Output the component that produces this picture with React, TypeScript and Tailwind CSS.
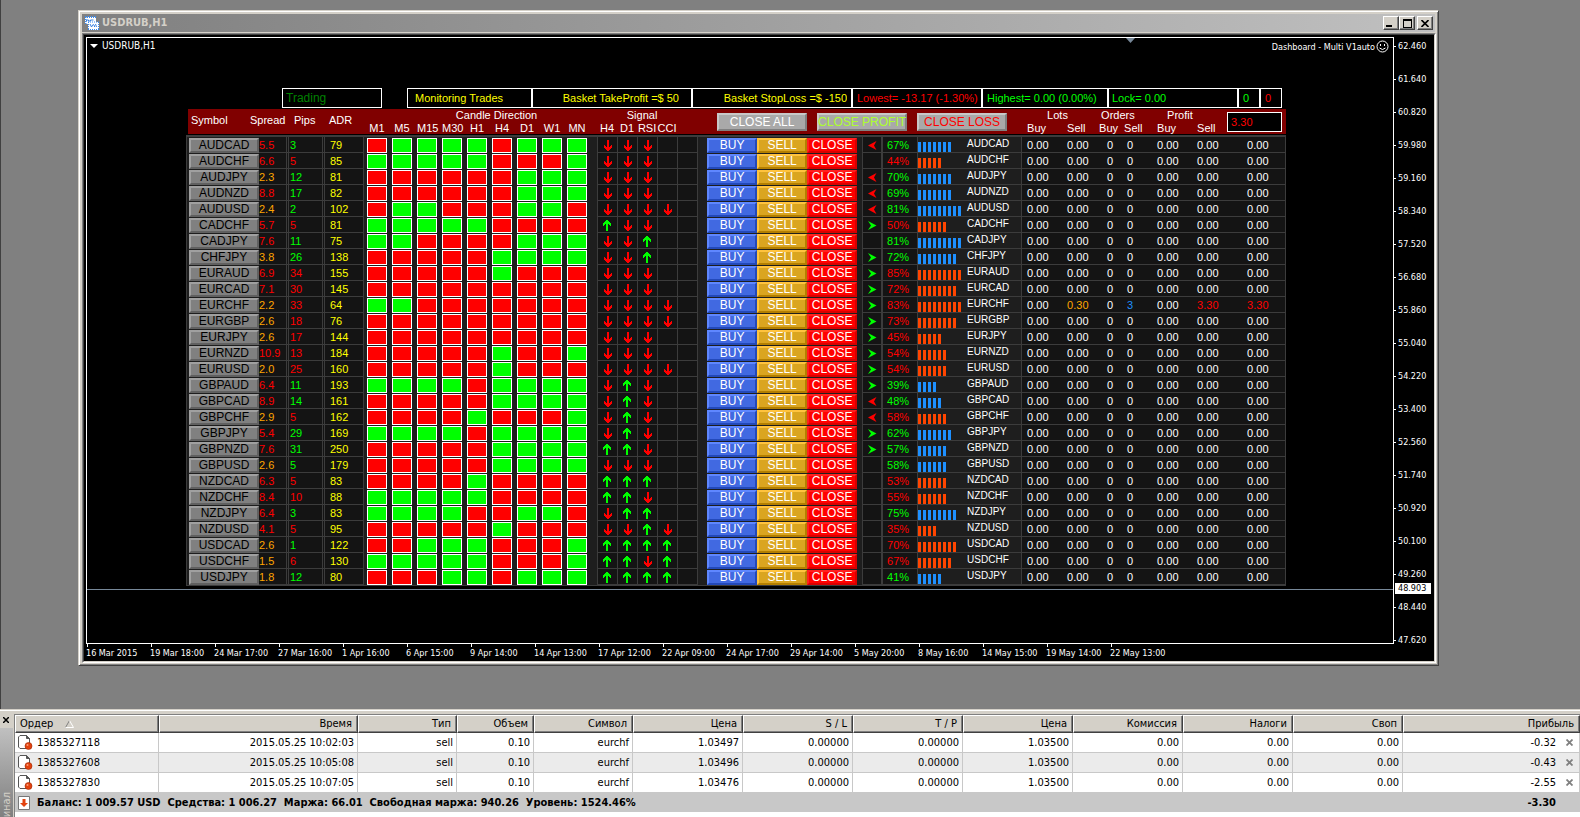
import type { ReactNode } from "react";

type Row = {
  symbol: string;
  spread: string;
  pips: number;
  adr: number;
  candles: string;
  signals: string;
  turn: "<" | ">" | "";
  pct: number;
  up: boolean;
  bars: number;
};

const r = (
  symbol: string,
  spread: string,
  pips: number,
  adr: number,
  candles: string,
  signals: string,
  turn: Row["turn"],
  pct: number,
  up: boolean,
  bars: number
): Row => ({ symbol, spread, pips, adr, candles, signals, turn, pct, up, bars });

// candles: R = bearish, G = bullish, M1 to MN. signals: D / U for H4, D1, RSI, CCI
const rows: Row[] = [
  r("AUDCAD", "5.5", 3, 79, "RGGGGRGGG", "DDD", "<", 67, true, 7),
  r("AUDCHF", "6.6", -5, 85, "GGGGGRRRG", "DDD", "", 44, false, 5),
  r("AUDJPY", "2.3", 12, 81, "RRRRRRGGG", "DDD", "<", 70, true, 7),
  r("AUDNZD", "8.8", 17, 82, "RRRRRRGGG", "DDD", "<", 69, true, 7),
  r("AUDUSD", "2.4", 2, 102, "RGGRRRGGR", "DDDD", "<", 81, true, 9),
  r("CADCHF", "5.7", -5, 81, "GGGGGRRRR", "UDD", ">", 50, false, 6),
  r("CADJPY", "7.6", 11, 75, "GGRRRRGGG", "DDU", "", 81, true, 9),
  r("CHFJPY", "3.8", 26, 138, "RRRRRGGGG", "DDU", ">", 72, true, 8),
  r("EURAUD", "6.9", -34, 155, "RRRRRGRRR", "DDD", ">", 85, false, 9),
  r("EURCAD", "7.1", -30, 145, "RRRRRRRRR", "DDD", ">", 72, false, 8),
  r("EURCHF", "2.2", -33, 64, "GGRRRRRRR", "DDDD", ">", 83, false, 9),
  r("EURGBP", "2.6", -18, 76, "RRRRRRRRR", "DDDD", ">", 73, false, 8),
  r("EURJPY", "2.6", -17, 144, "RRRRRRRRR", "DDD", ">", 45, false, 5),
  r("EURNZD", "10.9", -13, 184, "RRRRRGRRG", "DDD", ">", 54, false, 6),
  r("EURUSD", "2.0", -25, 160, "RRRRRGRRR", "DDDD", ">", 54, false, 6),
  r("GBPAUD", "6.4", 11, 193, "GGGGRGGGG", "DUD", ">", 39, true, 4),
  r("GBPCAD", "8.9", 14, 161, "RRRRRGGGG", "DUD", "<", 48, true, 5),
  r("GBPCHF", "2.9", -5, 162, "RRRRGRRRG", "DUD", "<", 58, false, 6),
  r("GBPJPY", "5.4", 29, 169, "GGGGRGGGG", "DUD", ">", 62, true, 7),
  r("GBPNZD", "7.6", 31, 250, "RRRRRGGGG", "UUD", ">", 57, true, 6),
  r("GBPUSD", "2.6", 5, 179, "RRRRRGGGG", "DDD", "", 58, true, 6),
  r("NZDCAD", "6.3", -5, 83, "RRRRGRRRR", "UUU", "", 53, false, 6),
  r("NZDCHF", "8.4", -10, 88, "GGGGGRRRR", "UUD", "", 55, false, 6),
  r("NZDJPY", "6.4", 3, 83, "GGGGRRGGR", "DUU", "", 75, true, 8),
  r("NZDUSD", "4.1", -5, 95, "RRRRRGRRR", "DDUD", "", 35, false, 4),
  r("USDCAD", "2.6", 1, 122, "RRGGGRRRG", "UUUU", "", 70, false, 8),
  r("USDCHF", "1.5", -6, 130, "GGGGGRRRG", "UUDU", "", 67, false, 7),
  r("USDJPY", "1.8", 12, 80, "RRRGGRGGG", "UUUU", "", 41, true, 5),
];

const timeframes = ["M1", "M5", "M15", "M30", "H1", "H4", "D1", "W1", "MN"];

const columnWidths = [
  3, 70, 30, 36, 39, 3, 25, 25, 25, 25, 25, 25, 25, 25, 25, 5, 20, 20, 20, 20, 20, 10, 50, 50, 50, 5,
  20, 35, 104, 40, 40, 20, 30, 40, 50, 45,
];

const prices = [
  "62.460", "61.640", "60.820", "59.980", "59.160", "58.340", "57.520", "56.680", "55.860", "55.040",
  "54.220", "53.400", "52.560", "51.740", "50.920", "50.100", "49.260", "48.440", "47.620",
];

const dates = [
  "16 Mar 2015", "19 Mar 18:00", "24 Mar 17:00", "27 Mar 16:00", "1 Apr 16:00", "6 Apr 15:00",
  "9 Apr 14:00", "14 Apr 13:00", "17 Apr 12:00", "22 Apr 09:00", "24 Apr 17:00", "29 Apr 14:00",
  "5 May 20:00", "8 May 16:00", "14 May 15:00", "19 May 14:00", "22 May 13:00",
];

const orderColumns = [
  { label: "Время", width: 199 },
  { label: "Тип", width: 99 },
  { label: "Объем", width: 77 },
  { label: "Символ", width: 99 },
  { label: "Цена", width: 110 },
  { label: "S / L", width: 110 },
  { label: "T / P", width: 110 },
  { label: "Цена", width: 110 },
  { label: "Комиссия", width: 110 },
  { label: "Налоги", width: 110 },
  { label: "Своп", width: 110 },
];

const orders = [
  { id: "1385327118", time: "2015.05.25 10:02:03", price: "1.03497", profit: "-0.32" },
  { id: "1385327608", time: "2015.05.25 10:05:08", price: "1.03496", profit: "-0.43" },
  { id: "1385327830", time: "2015.05.25 10:07:05", price: "1.03476", profit: "-2.55" },
];

function Signal({ dir }: { dir?: string }) {
  if (!dir) return null;
  return dir === "U" ? (
    <svg className="ml-[5px] block" width="8" height="11" viewBox="0 0 8 11" fill="#00ff00" shapeRendering="crispEdges">
      <path d="M3 0h2v1h1v1h1v1h1v3H7V5H6V4H5v7H3V4H2v1H1v1H0V3h1V2h1V1h1z" />
    </svg>
  ) : (
    <svg className="ml-[6px] block" width="8" height="11" viewBox="0 0 8 11" fill="#ff0000" shapeRendering="crispEdges">
      <path d="M3 0h2v7h1V6h1V5h1v3H7v1H6v1H5v1H3v-1H2V9H1V8H0V5h1v1h1v1h1z" />
    </svg>
  );
}

function Turn({ turn }: { turn: Row["turn"] }) {
  if (!turn) return null;
  return (
    <svg className="ml-[5px] block" width="9" height="9" viewBox="0 0 9 9">
      {turn === ">" ? (
        <path d="M0 0l8.500 4.500L0 9l3-4.500z" fill="#00ff00" />
      ) : (
        <path d="M8.500 0L0 4.500 8.500 9 6 4.500z" fill="#ff0000" />
      )}
    </svg>
  );
}

function Field({ label, value, className }: { label: string; value: string; className: string }) {
  return (
    <input
      readOnly
      aria-label={label}
      value={value}
      className={`h-5 min-w-0 border border-white bg-black text-[11px] outline-none ${className}`}
    />
  );
}

function TradeButton({ children, className }: { children: ReactNode; className: string }) {
  return (
    <button
      type="button"
      className={`mt-px block h-[15px] w-full border-2 text-center text-xs leading-[11px] whitespace-nowrap ${className}`}
    >
      {children}
    </button>
  );
}

const cell = "border-b border-b-[#3c3c3c] bg-[#141414] p-0 pt-[2px]";

function DashboardRow({ row }: { row: Row }) {
  const open = row.symbol === "EURCHF";
  return (
    <tr className="h-4 leading-[13px]">
      <td className="border-l border-[#3c3c3c] p-0" />
      <td className="p-0">
        <TradeButton className="border-t-[#a0a0a0] border-r-[#606060] border-b-[#606060] border-l-[#a0a0a0] bg-[#808080] text-black">
          {row.symbol}
        </TradeButton>
      </td>
      <td className={`${cell} border-r-3 border-r-[#3c3c3c] [border-right-style:double] ${parseFloat(row.spread) < 4 ? "text-[#ffa500]" : "text-[#ff0000]"}`}>
        {row.spread}
      </td>
      <td className={`${cell} border-r-3 border-r-[#3c3c3c] pl-px [border-right-style:double] ${row.pips > 0 ? "text-[#00ff00]" : "text-[#ff0000]"}`}>
        {Math.abs(row.pips)}
      </td>
      <td className={`${cell} border-r border-r-[#3c3c3c] pl-[5px] text-[#ffff00]`}>{row.adr}</td>
      <td className="p-0" />
      {row.candles.split("").map((c, i) => (
        <td key={i} className="p-0">
          <div className={`mt-px h-[15px] w-5 border border-white ${c === "G" ? "bg-[#00ff00]" : "bg-[#ff0000]"}`} />
        </td>
      ))}
      <td className="p-0" />
      {[0, 1, 2, 3, 4].map((i) => (
        <td key={i} className={`${cell} border-l border-l-[#3c3c3c]`}>
          <Signal dir={row.signals[i]} />
        </td>
      ))}
      <td className="border-l border-[#3c3c3c] p-0" />
      <td className="p-0">
        <TradeButton className="border-t-[#5f87ff] border-r-[#2349b9] border-b-[#2349b9] border-l-[#5f87ff] bg-[#4169e1] text-white">
          BUY
        </TradeButton>
      </td>
      <td className="p-0">
        <TradeButton className="border-t-[#ffc33e] border-r-[#b47f00] border-b-[#b47f00] border-l-[#ffc33e] bg-[#daa520] text-white">
          SELL
        </TradeButton>
      </td>
      <td className="p-0">
        <TradeButton className="border-t-[#ff2020] border-r-[#d80000] border-b-[#d80000] border-l-[#ff2020] bg-[#ff0000] text-white">
          CLOSE
        </TradeButton>
      </td>
      <td className="p-0" />
      <td className={`${cell} border-x border-x-[#3c3c3c]`}>
        <Turn turn={row.turn} />
      </td>
      <td className={`${cell} border-l border-l-[#3c3c3c] pl-1 ${row.up ? "text-[#00ff00]" : "text-[#ff0000]"}`}>
        {row.pct}%
      </td>
      <td className="border-b border-l border-[#3c3c3c] p-0">
        <div className="flex h-[15px] items-end">
          <div className="flex w-[49px] gap-[2px]">
            {Array.from({ length: row.bars }, (_, i) => (
              <span key={i} className={`h-[10px] w-[3px] ${row.up ? "bg-[#1e90ff]" : "bg-[#ff4500]"}`} />
            ))}
          </div>
          <span className="self-start text-[10px] leading-[13px] text-white">{row.symbol}</span>
        </div>
      </td>
      <td className={`${cell} border-l border-l-[#3c3c3c] pl-[5px]`}>0.00</td>
      <td className={`${cell} pl-[6px] ${open ? "text-[#ffa500]" : ""}`}>{open ? "0.30" : "0.00"}</td>
      <td className={`${cell} pl-[6px]`}>0</td>
      <td className={`${cell} pl-[6px] ${open ? "text-[#1e90ff]" : ""}`}>{open ? "3" : "0"}</td>
      <td className={`${cell} pl-[6px]`}>0.00</td>
      <td className={`${cell} pl-[6px] ${open ? "text-[#ff0000]" : ""}`}>{open ? "3.30" : "0.00"}</td>
      <td className={`${cell} border-r border-r-[#3c3c3c] pl-[6px] ${open ? "text-[#ff0000]" : ""}`}>
        {open ? "3.30" : "0.00"}
      </td>
    </tr>
  );
}

function Dashboard() {
  const bulk = "h-[18px] w-[90px] border-2 border-t-[#c8c8c8] border-r-[#808080] border-b-[#808080] border-l-[#c8c8c8] bg-[#a9a9a9] text-xs leading-[14px] whitespace-nowrap";
  return (
    <div className="ml-[99px] w-[1100px] font-['Liberation_Sans',Arial,sans-serif] text-[11px]">
      <div className="flex pr-1 pl-24">
        <Field label="Mode" value="Trading" className="w-[100px] pl-[3px] text-xs! text-[#008000]" />
        <div className="ml-[25px] flex">
          <Field label="Status" value="Monitoring Trades" className="w-[125px] pl-[7px] text-[#ffff00]" />
          <Field label="Take profit" value="Basket TakeProfit =$ 50" className="w-[160px] pr-[12px] text-right text-[#ffff00]" />
          <Field label="Stop loss" value="Basket StopLoss =$ -150" className="w-[160px] pr-1 text-right text-[#ffff00]" />
          <Field label="Lowest" value="Lowest= -13.17 (-1.30%)" className="w-[130px] pl-1 text-[#ff0000]" />
          <Field label="Highest" value="Highest= 0.00 (0.00%)" className="w-[126px] pl-1 text-[#00ff00]" />
          <Field label="Lock" value="Lock= 0.00" className="w-[130px] pl-[3px] text-[#00ff00]" />
          <Field label="Wins" value="0" className="w-[22px] pl-1 text-[#00ff00]" />
          <Field label="Losses" value="0" className="w-[22px] pl-1 text-[#ff0000]" />
        </div>
      </div>

      <table className="mt-px w-full table-fixed border-separate border-spacing-0 border-b border-[#3c3c3c] bg-[#1e1e1e] text-left whitespace-nowrap text-white">
        <colgroup>
          {columnWidths.map((w, i) => (
            <col key={i} style={{ width: w }} />
          ))}
        </colgroup>
        <thead className="bg-[#800000] [&_th]:p-0 [&_th]:font-normal">
          <tr className="h-[13px] leading-[13px]">
            <th rowSpan={2} colSpan={2} className="border-l-2 border-black">
              <span className="block pb-[2px] pl-[3px]">Symbol</span>
            </th>
            <th rowSpan={2}>
              <span className="-ml-[9px] block pb-[2px]">Spread</span>
            </th>
            <th rowSpan={2}>
              <span className="block pb-[2px] pl-[5px]">Pips</span>
            </th>
            <th rowSpan={2}>
              <span className="block pb-[2px] pl-1">ADR</span>
            </th>
            <th colSpan={11} className="text-center">
              <span className="pl-8">Candle Direction</span>
            </th>
            <th colSpan={5} className="text-center">
              <span className="pr-[10px]">Signal</span>
            </th>
            <th rowSpan={2} colSpan={8}>
              <div className="flex gap-[10px] pl-5">
                <button type="button" className={`${bulk} text-white`}>CLOSE ALL</button>
                <button type="button" className={`${bulk} flex justify-center text-[#adff2f]`}>CLOSE PROFIT</button>
                <button type="button" className={`${bulk} text-[#ff0000]`}>CLOSE LOSS</button>
              </div>
            </th>
            <th colSpan={2}>
              <span className="pl-[26px]">Lots</span>
            </th>
            <th colSpan={2}>Orders</th>
            <th colSpan={2}>
              <span className="pl-4">Profit</span>
            </th>
            <th rowSpan={2}>
              <Field label="Total" value="3.30" className="-ml-[14px] block w-[55px] pl-[3px] text-[#ff0000]" />
            </th>
          </tr>
          <tr className="h-3 leading-3">
            <th />
            {timeframes.map((t) => (
              <th key={t} className="text-center">
                <span className="pr-[5px]">{t}</span>
              </th>
            ))}
            <th />
            {["H4", "D1", "RSI", "CCI", ""].map((t) => (
              <th key={t} className="text-center">{t}</th>
            ))}
            <th><span className="pl-[6px]">Buy</span></th>
            <th><span className="pl-[6px]">Sell</span></th>
            <th><span className="-ml-[2px]">Buy</span></th>
            <th><span className="pl-[3px]">Sell</span></th>
            <th><span className="pl-[6px]">Buy</span></th>
            <th><span className="pl-[6px]">Sell</span></th>
          </tr>
          <tr className="h-[3px]">
            <th colSpan={36} className="h-[3px] border-t border-b-2 border-t-black border-b-[#3c3c3c]" />
          </tr>
        </thead>
        <tbody>
          {rows.map((row) => (
            <DashboardRow key={row.symbol} row={row} />
          ))}
        </tbody>
      </table>
    </div>
  );
}

function ChartWindow() {
  const control =
    "flex h-[14px] w-4 items-center justify-center border border-t-white border-r-[#404040] border-b-[#404040] border-l-white bg-[#d4d0c8] shadow-[inset_-1px_-1px_0_#808080]";
  return (
    <section className="flex flex-col border border-t-[#d4d0c8] border-r-[#404040] border-b-[#404040] border-l-[#d4d0c8] bg-[#d4d0c8] p-[2px] pl-[3px] shadow-[inset_1px_1px_0_#fff,inset_-1px_-1px_0_#808080]">
      <header className="mt-px mr-px flex h-[18px] items-center bg-linear-to-r from-[#808080] to-[#c0c0c0] pr-[2px] pl-[3px]">
        <svg width="14" height="14" viewBox="0 0 14 14">
          <path d="M0 1h11v7H0z" fill="#fff" />
          <path d="M0 1h11M.5 1v7" stroke="#3b8cf0" strokeWidth="2" strokeDasharray="1 1" />
          <path d="M1.500 5.500V4h2v1h2V4h3" fill="none" stroke="#3b82e0" />
          <path d="M3 6h11v8H3z" fill="#fff" />
          <path d="M3 6h11M3.500 6v8M3 13.500h11M13.500 6v8" stroke="#3b8cf0" strokeDasharray="1 1" />
          <path d="M5 8l1.500 3L8 8.500l1.500 1V11M10.500 8l1 3" fill="none" stroke="#3b82e0" />
        </svg>
        <h1 className="ml-[3px] flex-1 text-[11px] leading-[14px] font-bold text-[#d4d0c8]">USDRUB,H1</h1>
        <button type="button" aria-label="Minimize" className={control}>
          <span className="mt-[6px] mr-1 h-[2px] w-[6px] bg-black" />
        </button>
        <button type="button" aria-label="Maximize" className={control}>
          <span className="h-[9px] w-[9px] border border-t-2 border-black" />
        </button>
        <button type="button" aria-label="Close" className={`${control} ml-[2px]`}>
          <svg width="8" height="7" viewBox="0 0 8 7" stroke="#000" strokeWidth="1.600">
            <path d="M.5 0l7 7M7.500 0l-7 7" />
          </svg>
        </button>
      </header>

      <div className="mt-px border border-t-[#808080] border-r-white border-b-white border-l-[#808080]">
        <div className="flex border border-t-[#404040] border-r-[#d4d0c8] border-b-[#d4d0c8] border-l-[#404040] bg-black pt-[2px] pl-[2px] text-[9px] text-white">
          <div className="min-w-0 flex-1">
            <div className="relative h-[607px] overflow-hidden border border-white">
              <div className="flex h-[50px] items-start justify-between pt-[2px] pr-1 pl-[3px]">
                <div className="flex items-center gap-1 text-[10px] leading-3">
                  <svg width="8" height="4" viewBox="0 0 8 4" fill="#fff">
                    <path d="M0 0h8L4 4z" />
                  </svg>
                  <span>USDRUB,H1</span>
                </div>
                <div className="flex items-center gap-px leading-3">
                  <span>Dashboard - Multi V1auto</span>
                  <svg width="13" height="13" viewBox="0 0 13 13" fill="none" stroke="#fff">
                    <circle cx="6.500" cy="6.500" r="5.500" />
                    <path d="M4.500 4v2M8.500 4v2M3.500 8q3 3 6 0" />
                  </svg>
                </div>
              </div>
              <Dashboard />
              <svg className="absolute top-0 left-[1039px]" width="9" height="5" viewBox="0 0 9 5" fill="#778899">
                <path d="M0 0h9L4.500 5z" />
              </svg>
              <div className="absolute top-[551px] h-px w-full bg-[#778899]" />
            </div>
            <ol className="flex h-[17px] leading-[12px] whitespace-nowrap">
              {dates.map((d) => (
                <li key={d} className="w-16 shrink-0">
                  <div className="ml-px h-[3px] w-px bg-white" />
                  {d}
                </li>
              ))}
            </ol>
          </div>
          <ol className="relative flex w-10 shrink-0 flex-col gap-[21px] pt-[3px] leading-3">
            {prices.map((p) => (
              <li key={p} className="flex items-center gap-[2px]">
                <span className="h-px w-[2px] bg-white" />
                {p}
              </li>
            ))}
            <li className="absolute top-[546px] left-px w-[36px] bg-white pl-[3px] leading-[11px] text-black">48.903</li>
          </ol>
        </div>
      </div>
    </section>
  );
}

function OrderIcon() {
  return (
    <svg width="15" height="15" viewBox="0 0 15 15" className="shrink-0">
      <path d="M2 .5h6.500l3 3v10H2L.5 12V2z" fill="#fff" stroke="#555" />
      <path d="M8.500.5v3h3z" fill="#555" stroke="#555" />
      <circle cx="10.500" cy="11" r="3.500" fill="#e2420f" stroke="#a12600" strokeWidth=".6" />
      <circle cx="9.500" cy="10" r="1" fill="#ff9a70" />
    </svg>
  );
}

function Terminal() {
  const head =
    "border-t border-r border-b border-l border-t-white border-r-[#404040] border-b-[#404040] border-l-white bg-[#d4d0c8] font-normal shadow-[inset_-1px_-1px_0_#808080]";
  return (
    <section className="flex h-[108px] overflow-hidden border-t border-[#d4d0c8] bg-[#d4d0c8] text-[11px] leading-[14px] text-black shadow-[inset_0_1px_0_#fff]">
      <aside className="flex w-[14px] shrink-0 flex-col">
        <button type="button" aria-label="Close terminal" className="mt-1 flex h-[14px] items-center justify-center pr-[2px] pb-[2px]">
          <svg width="6" height="6" viewBox="0 0 6 6" stroke="#000" strokeWidth="1.500">
            <path d="M0 0l6 6M6 0L0 6" />
          </svg>
        </button>
        <div className="mr-px flex-1 overflow-hidden bg-linear-to-b from-[#c0c0c0] to-[#808080] pt-16">
          <span className="rotate-180 text-[#d4d0c8] [writing-mode:vertical-rl]">Терминал</span>
        </div>
      </aside>
      <div className="mt-1 min-w-0 flex-1 border-t border-l border-[#808080] bg-white">
        <table className="w-full table-fixed border-separate border-spacing-0 text-right whitespace-nowrap">
          <colgroup>
            <col style={{ width: 144 }} />
            {orderColumns.map((c, i) => (
              <col key={i} style={{ width: c.width }} />
            ))}
            <col />
          </colgroup>
          <thead>
            <tr className="h-[18px]">
              <th className={`${head} py-0 pl-1 text-left`}>
                <span className="inline-flex items-center gap-3">
                  Ордер
                  <svg width="9" height="8" viewBox="0 0 9 8" fill="none">
                    <path d="M.5 7.500L4.500.5" stroke="#808080" />
                    <path d="M4.500.5l4 7h-8" stroke="#fff" />
                  </svg>
                </span>
              </th>
              {orderColumns.map((c, i) => (
                <th key={i} className={`${head} py-0 pr-[5px]`}>{c.label}</th>
              ))}
              <th className={`${head} py-0 pr-[5px]`}>Прибыль</th>
            </tr>
          </thead>
          <tbody className="[&_td]:border-r [&_td]:border-b [&_td]:border-[#c8c8c8] [&_td]:py-0 [&_td]:pr-[3px]">
            {orders.map((o) => (
              <tr key={o.id} className="h-5 even:bg-[#ebebeb]">
                <td className="pl-[3px] text-left">
                  <div className="flex items-center gap-1">
                    <OrderIcon />
                    {o.id}
                  </div>
                </td>
                <td>{o.time}</td>
                <td>sell</td>
                <td>0.10</td>
                <td>eurchf</td>
                <td>{o.price}</td>
                <td>0.00000</td>
                <td>0.00000</td>
                <td>1.03500</td>
                <td>0.00</td>
                <td>0.00</td>
                <td>0.00</td>
                <td>
                  <div className="flex items-center justify-end gap-[10px] pr-[3px]">
                    {o.profit}
                    <button type="button" aria-label={`Close order ${o.id}`}>
                      <svg width="7" height="7" viewBox="0 0 7 7" stroke="#808080" strokeWidth="1.800">
                        <path d="M.5.5l6 6M6.500.5l-6 6" />
                      </svg>
                    </button>
                  </div>
                </td>
              </tr>
            ))}
          </tbody>
        </table>
        <div className="flex h-[19px] items-center bg-[#c8c8c8] pr-6 pl-[3px] font-bold">
          <svg width="12" height="14" viewBox="0 0 12 14" className="shrink-0">
            <path d="M.5.5h11v13H.5z" fill="#fff" stroke="#777" />
            <path d="M4.500 3h3v4h2.500L6 11 2 7h2.500z" fill="#e2420f" />
          </svg>
          <p className="ml-[7px] flex-1 whitespace-pre">
            Баланс: 1 009.57 USD  Средства: 1 006.27  Маржа: 66.01  Свободная маржа: 940.26  Уровень: 1524.46%
          </p>
          <span>-3.30</span>
        </div>
      </div>
    </section>
  );
}

export default function App() {
  return (
    <div className="flex min-h-screen flex-col bg-[#808080] font-['DejaVu_Sans_Condensed','DejaVu_Sans',Tahoma,sans-serif]">
      <main className="flex-1 border-l border-[#404040] pt-[10px] pr-[141px] pb-[42px] pl-[77px]">
        <ChartWindow />
      </main>
      <Terminal />
    </div>
  );
}
